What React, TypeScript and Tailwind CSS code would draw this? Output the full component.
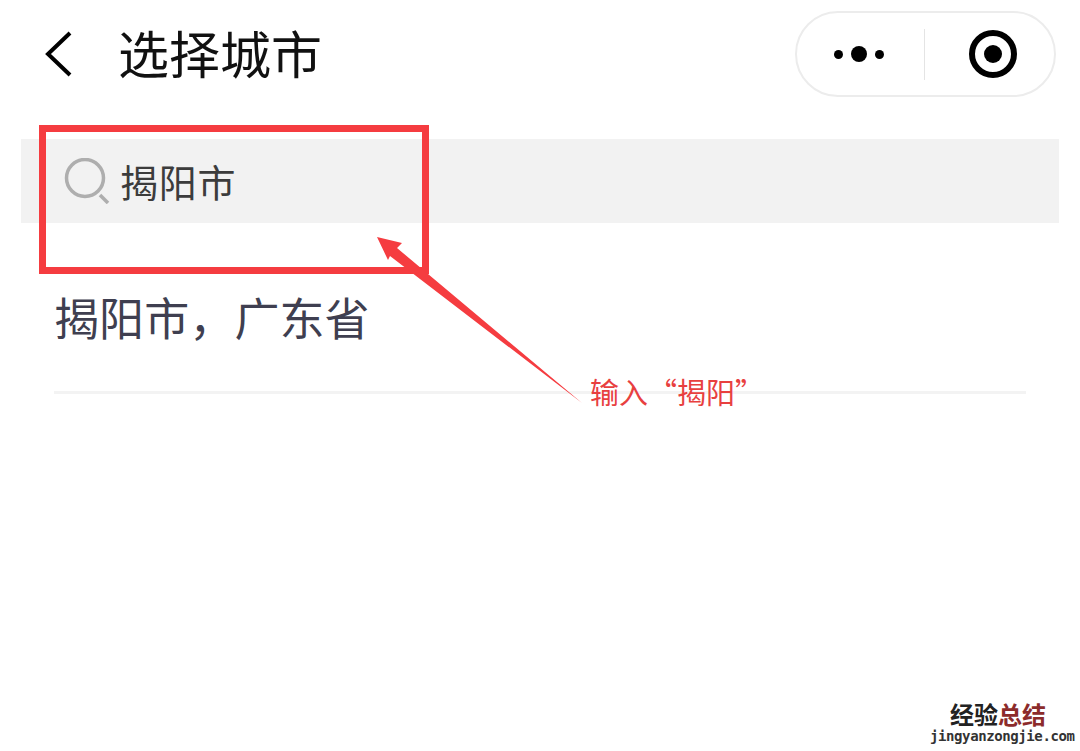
import React from "react";

const cjk = "font-['Noto_Sans_CJK_SC','Liberation_Sans',sans-serif]";

const Capsule = () => (
  <div className="flex h-[86px] w-[261px] items-center rounded-full border-2 border-[#ececec] bg-white">
    <div className="flex w-[127px] items-center justify-center gap-[8px] pr-[3px]">
      <span className="size-[9px] rounded-full bg-black" />
      <span className="size-[16px] rounded-full bg-black" />
      <span className="size-[9px] rounded-full bg-black" />
    </div>
    <div className="h-[51px] w-px bg-[#e4e4e4]" />
    <div className="flex flex-1 items-center justify-center pl-[6px]">
      <div className="flex size-[48px] items-center justify-center rounded-full border-[6px] border-black">
        <span className="size-[18px] rounded-full bg-black" />
      </div>
    </div>
  </div>
);

const App: React.FC = () => {
  return (
    <div className={`relative h-[751px] w-[1080px] overflow-hidden bg-white ${cjk}`}>
      {/* 标题栏 */}
      <header className="flex h-[139px] items-start pl-[44px] pr-[24px] pt-[11px]">
        <svg className="mt-[19px] h-[48px] w-[30px]" viewBox="0 0 30 48" fill="none">
          <path d="M26 3 L4 24 L26 45" stroke="#000" strokeWidth="4" />
        </svg>
        <h1 className="ml-[44px] mt-[5px] text-[51px] leading-[72px] font-normal text-[#111]">选择城市</h1>
        <div className="ml-auto">
          <Capsule />
        </div>
      </header>

      {/* 搜索框 */}
      <div className="mx-[21px] flex h-[84px] items-center bg-[#f2f2f2] pl-[43px]">
        <svg className="h-[46px] w-[46px]" viewBox="0 0 46 46" fill="none">
          <circle cx="21" cy="20" r="18.5" stroke="#aeaeae" strokeWidth="3.5" />
          <path d="M36 37 L44 45" stroke="#aeaeae" strokeWidth="3.5" />
        </svg>
        <span className="ml-[10px] -mt-[1px] text-[38px] leading-[54px] tracking-[0.8px] text-[#3c3c3c]">揭阳市</span>
      </div>

      {/* 结果 */}
      <div className="mx-[54px] mt-[61px] border-b-[3px] border-[#f3f3f3] pb-[42px]">
        <div className="text-[45px] leading-[65px] tracking-[0.1px] text-[#3f3f50]">揭阳市，广东省</div>
      </div>

      {/* 标注 */}
      <div className="absolute left-[39px] top-[125px] h-[149px] w-[390px] border-[7px] border-[#f53c40]" />
      <svg className="absolute left-0 top-0" width="1080" height="751" viewBox="0 0 1080 751" fill="none">
        <polygon
          points="377,237 402,243 397,248 582,403 390,256 388,260"
          fill="#f53c40"
        />
      </svg>
      <div className="absolute left-[590px] top-[371px] text-[29px] leading-[40px] text-[#e8403f]">输入“揭阳”</div>

      {/* 水印 */}
      <div className="absolute left-[930px] top-[700px] w-[136px] text-center">
        <div className="text-[24px] leading-[28px] font-bold text-[#222]">
          经验<span className="text-[#8c2b2b]">总结</span>
        </div>
        <div className="font-['DejaVu_Sans_Mono',monospace] text-[14px] leading-[16px] font-bold tracking-[-0.4px] text-[#333]">
          jingyanzongjie.com
        </div>
      </div>
    </div>
  );
};

export default App;
